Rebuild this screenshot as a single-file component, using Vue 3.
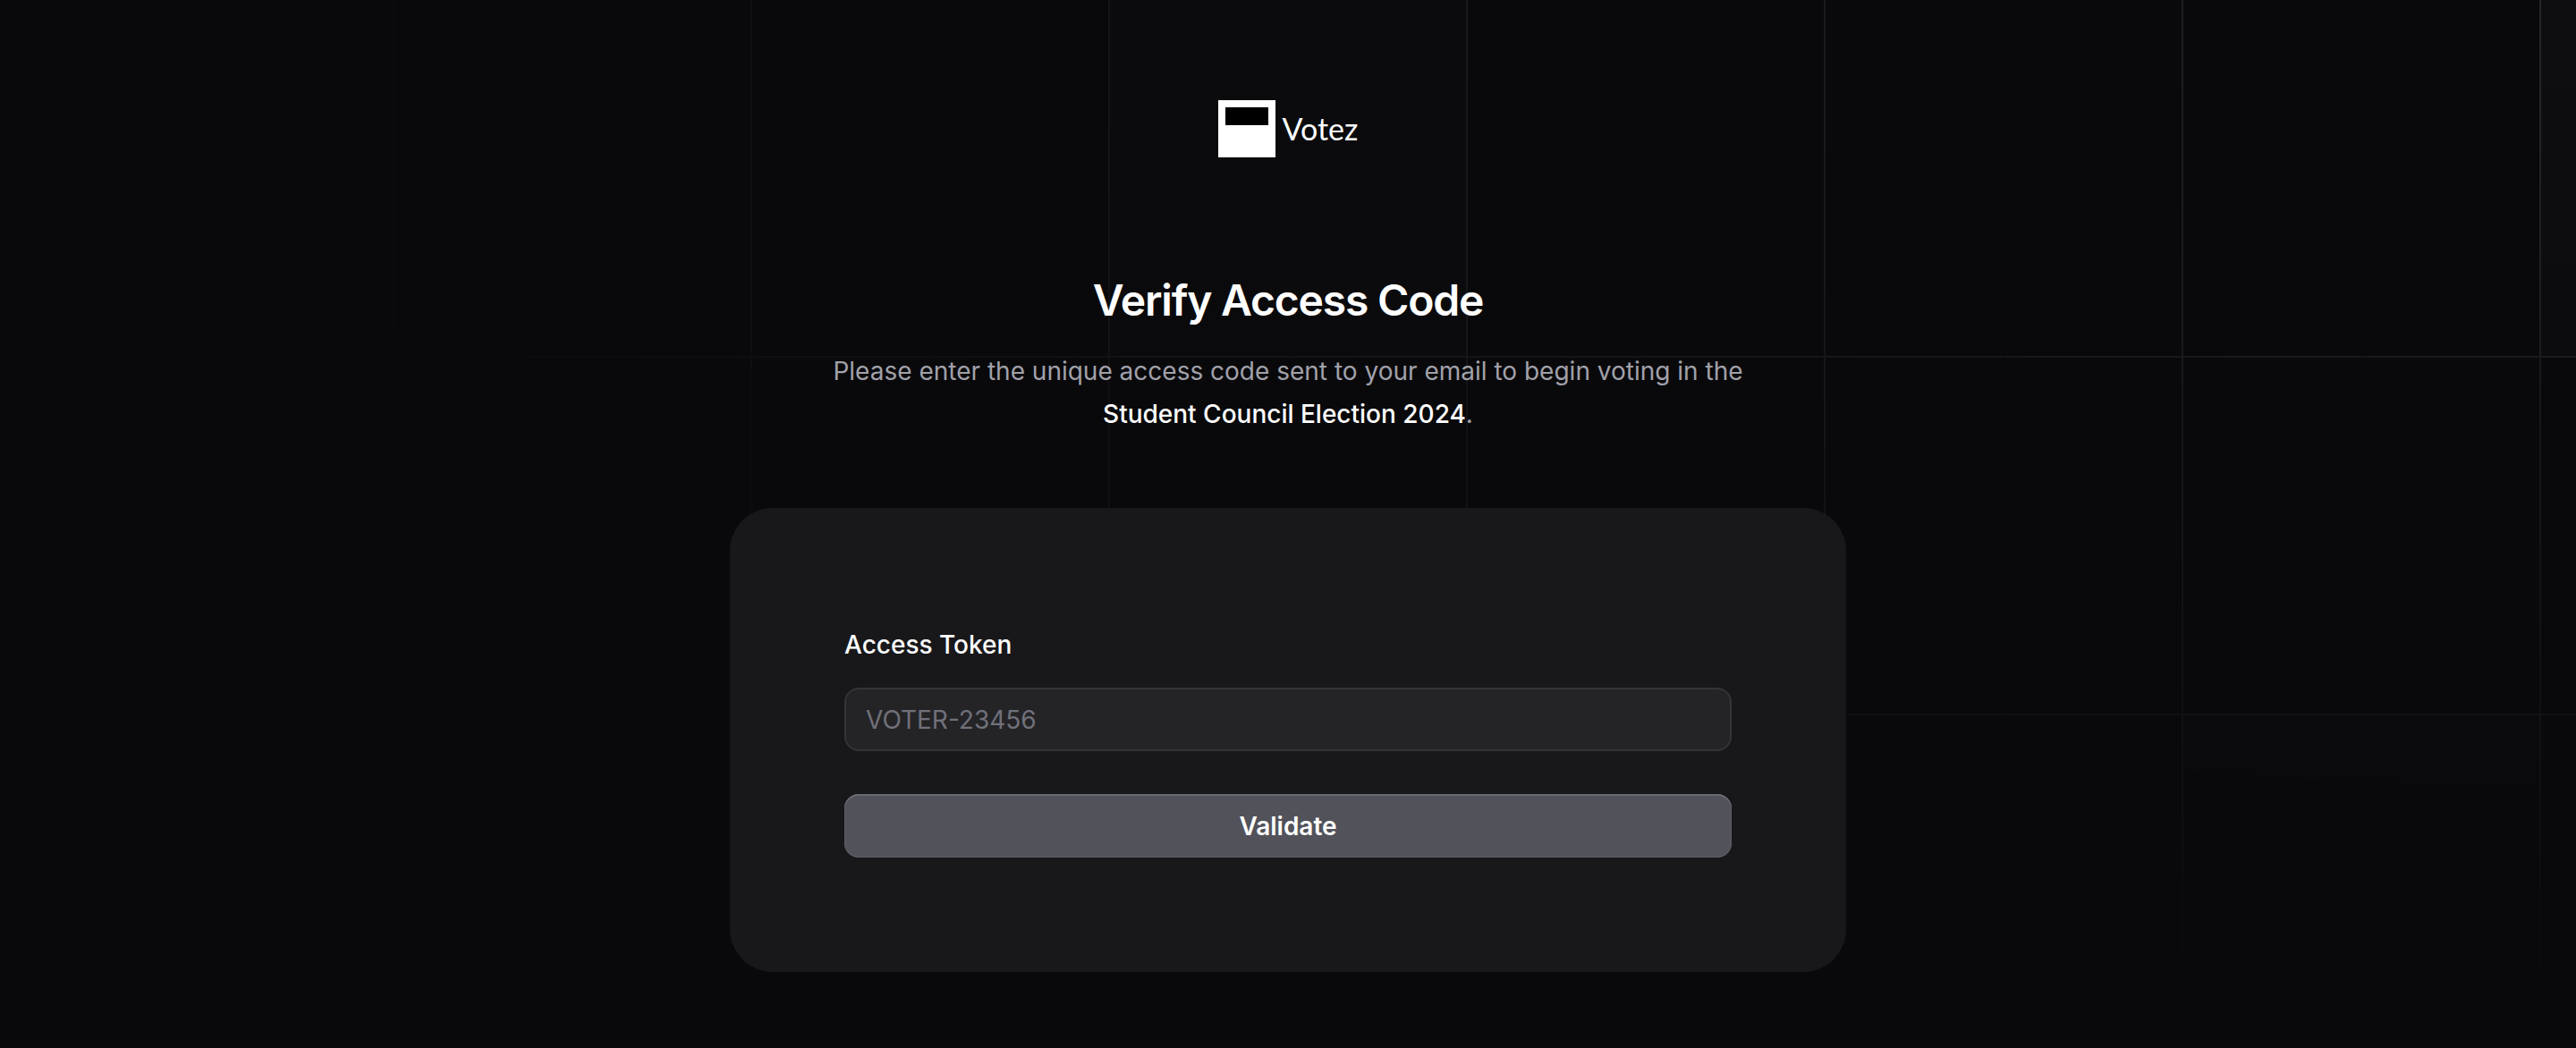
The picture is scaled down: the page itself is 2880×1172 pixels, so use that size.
<script setup>
import { ref } from 'vue'

const token = ref('')
</script>

<template>
  <div class="page">
    <svg class="grid" aria-hidden="true">
      <defs>
        <pattern id="grid-lines" width="400" height="400" x="50%" y="-2" patternUnits="userSpaceOnUse">
          <path d="M200 400V1M1 1H400" class="lines" />
        </pattern>
      </defs>
      <svg x="50%" y="-2" class="cells">
        <path d="M-201 0h402v402h-402ZM1399 0h402v402h-402ZM999 800h402v402h-402Z" />
      </svg>
      <rect width="100%" height="100%" fill="url(#grid-lines)" />
    </svg>

    <main class="content">
      <a class="brand" href="#">
        <svg class="mark" viewBox="0 0 64 64" aria-hidden="true">
          <rect width="64" height="64" fill="#fff" />
          <rect x="8" y="8" width="48" height="20" fill="#000" />
        </svg>
        <span>Votez</span>
      </a>

      <h1>Verify Access Code</h1>
      <p class="intro">
        Please enter the unique access code sent to your email to begin voting in the
        <strong>Student Council Election 2024</strong>.
      </p>

      <form class="card" @submit.prevent>
        <label for="token">Access Token</label>
        <input id="token" v-model="token" type="text" placeholder="VOTER-23456" />
        <button type="submit">Validate</button>
      </form>
    </main>
  </div>
</template>

<style>
body {
  margin: 0;
  background: #09090b;
}
</style>

<style scoped>
.page {
  position: relative;
  min-height: 100vh;
  box-sizing: border-box;
  padding: 112px 48px 84px;
  background: #09090b;
  color: #fff;
  font-family: Inter, sans-serif;
  font-size: 28px;
  line-height: 48px;
}

.grid {
  position: absolute;
  inset: 0;
  width: 100%;
  height: 100%;
  -webkit-mask-image: radial-gradient(100% 100% at top right, white, transparent);
  mask-image: radial-gradient(100% 100% at top right, white, transparent);
}

.lines {
  fill: none;
  stroke: rgba(255, 255, 255, 0.1);
  stroke-width: 2px;
}

.cells {
  overflow: visible;
  fill: rgba(255, 255, 255, 0.025);
}

.content {
  position: relative;
  display: flex;
  flex-direction: column;
  align-items: center;
}

.brand {
  display: flex;
  align-items: center;
  gap: 8px;
  color: #fff;
  font-family: Lato, sans-serif;
  font-size: 34px;
  line-height: 64px;
  text-decoration: none;
}

.mark {
  width: 64px;
  height: 64px;
}

h1 {
  margin: 128px 0 0;
  font-size: 48px;
  line-height: 64px;
  font-weight: 600;
  letter-spacing: -0.025em;
}

.intro {
  max-width: 1088px;
  margin: 23px 0 81px;
  color: #a1a1aa;
  text-align: center;
}

.intro strong {
  color: #fff;
  font-weight: 500;
}

.card {
  display: flex;
  flex-direction: column;
  box-sizing: border-box;
  width: 100%;
  max-width: 1248px;
  padding: 128px;
  border-radius: 48px;
  background: #18181b;
}

label {
  margin-bottom: 23px;
  font-weight: 500;
  line-height: 50px;
}

input,
button {
  box-sizing: border-box;
  height: 71px;
  border-radius: 16px;
  color: #fff;
  font: inherit;
}

input {
  width: 100%;
  margin: 0 0 48px;
  padding: 0 22px;
  border: 2px solid #343436;
  background: #242427;
}

input::placeholder {
  color: #71717a;
  opacity: 1;
}

button {
  padding: 0 24px;
  border: 0;
  background: #52525b;
  box-shadow: inset 0 2px #6a6a72, inset 0 0 0 1px #5d5d66;
  font-weight: 600;
}
</style>
